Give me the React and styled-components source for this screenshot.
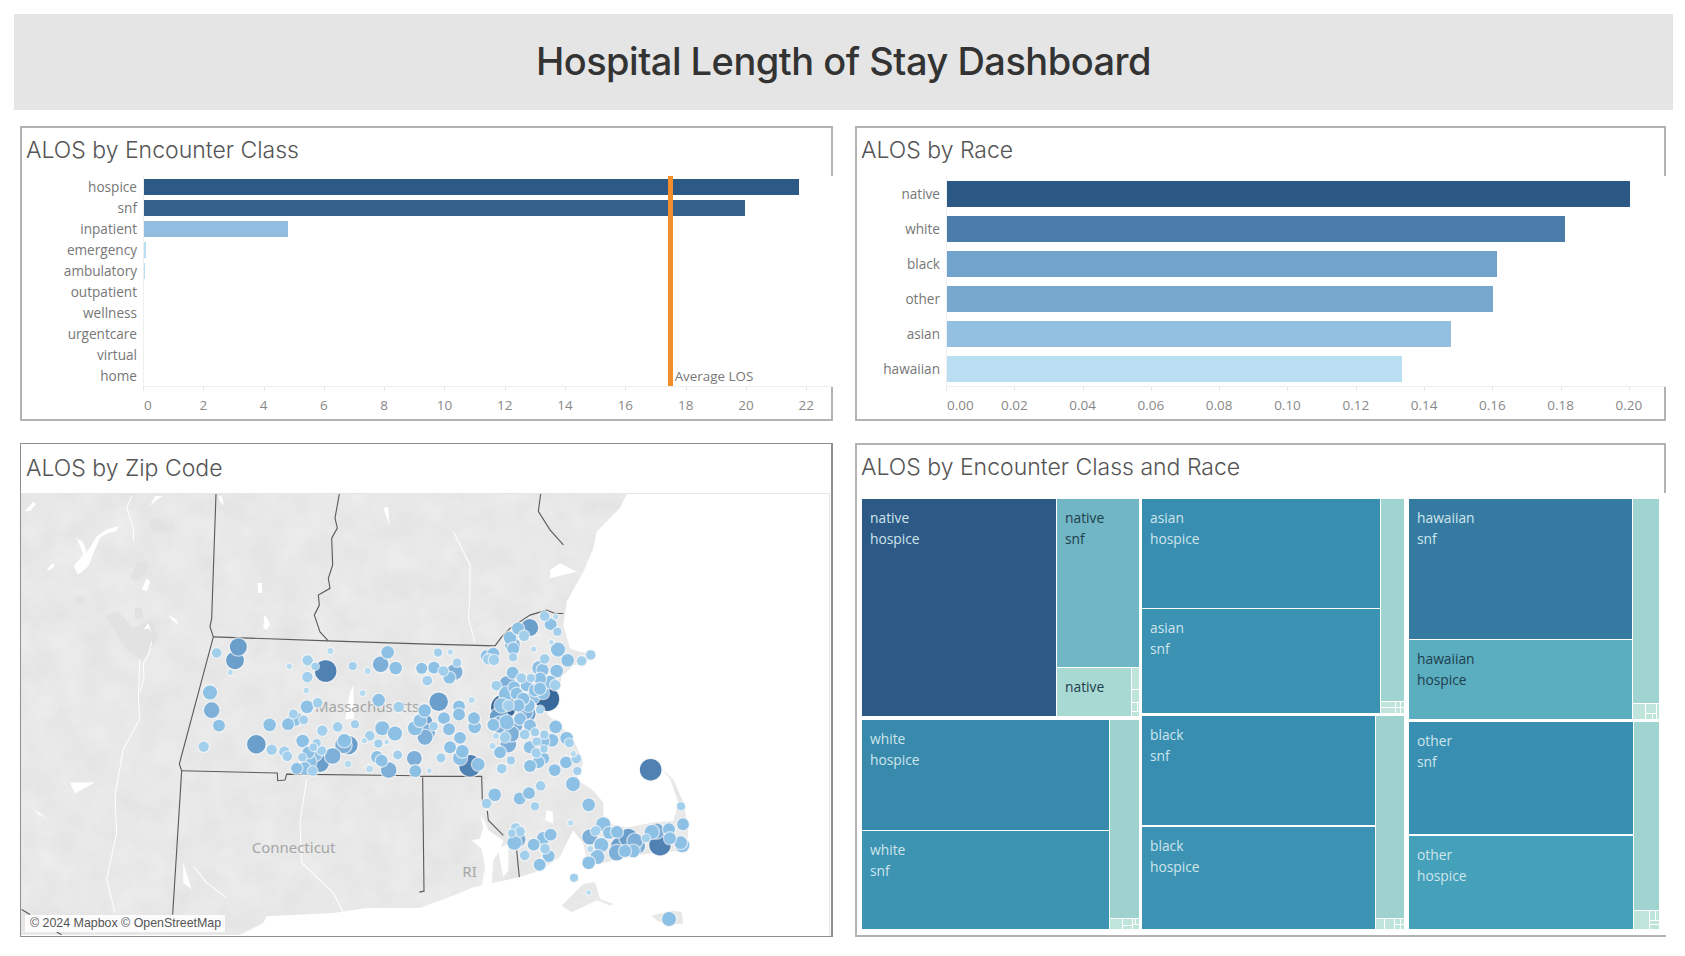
import React from 'react';
import styled, { createGlobalStyle } from 'styled-components';

const GlobalStyle = createGlobalStyle`
  html, body {
    margin: 0;
    padding: 0;
    background: #fff;
  }
  body {
    font-family: "Open Sans", "Noto Sans", sans-serif;
  }
`;

const Page = styled.div`
  width: 1685px;
  height: 956px;
  box-sizing: border-box;
  padding: 14px 12px 0 14px;
  overflow: hidden;
`;

const Banner = styled.header`
  height: 96px;
  padding-bottom: 2px;
  box-sizing: border-box;
  background: #e5e5e5;
  display: flex;
  align-items: center;
  justify-content: center;
`;

const BannerTitle = styled.h1`
  margin: 0;
  font-family: Inter, "Open Sans", sans-serif;
  font-size: 38px;
  font-weight: 500;
  letter-spacing: -0.5px;
  color: #333;
`;

const Board = styled.main`
  display: grid;
  grid-template-columns: 813px 811px;
  grid-template-rows: 295px 494px;
  column-gap: 22px;
  row-gap: 22px;
  margin: 16px 0 0 6px;
`;

const CardTitle = styled.h2`
  flex: 0 0 48px;
  margin: 0;
  padding-left: 4px;
  font-family: Inter, "Open Sans", sans-serif;
  font-size: 23px;
  font-weight: 300;
  line-height: 45px;
  color: #555;
`;

const Card = styled.section`
  box-sizing: border-box;
  border: 2px solid #b3b3b3;
  display: flex;
  flex-direction: column;
  min-width: 0;
`;

const MapCard = styled(Card)`
  border-color: #8f8f8f;
  border-width: 1px 2px 1px 1px;

  ${CardTitle} {
    flex-basis: 49px;
    padding-left: 5px;
    line-height: 48px;
  }
`;

/* bar charts */
const Chart = styled.div`
  display: grid;
  grid-template-columns: ${(p) => p.$labels}px minmax(0, 1fr);
  grid-template-rows: 211px 1fr;
  column-gap: 6px;
`;

const RowLabels = styled.div`
  display: flex;
  flex-direction: column;
  padding-bottom: 1px;
`;

const RowLabel = styled.div`
  flex: 1;
  display: flex;
  align-items: center;
  justify-content: flex-end;
  font-size: 13.6px;
  color: #777;
`;

const Plot = styled.div`
  position: relative;
  box-sizing: border-box;
  margin-right: -2px;
  background: #fff;
  border-left: 1px solid #efefef;
  border-bottom: 1px solid #efefef;
  display: flex;
  flex-direction: column;
`;

const BarRow = styled.div`
  flex: 1;
  display: flex;
  align-items: center;
`;

const Bar = styled.div`
  height: ${(p) => p.$h}px;
  background: ${(p) => p.$color};
`;

const RefLine = styled.div`
  position: absolute;
  top: 0;
  bottom: 0;
  width: 5px;
  background: #f28e2b;
`;

const RefLabel = styled.span`
  position: absolute;
  bottom: 0;
  line-height: 20px;
  font-size: 13.4px;
  color: #777;
  white-space: nowrap;
`;

const Axis = styled.div`
  grid-column: 2;
  display: flex;
  min-width: 0;
`;

const Tick = styled.div`
  flex: 0 0 ${(p) => p.$step}px;
  display: flex;
  flex-direction: column;
  align-items: flex-start;
`;

const TickMark = styled.div`
  width: 1px;
  height: 4px;
  background: #e6e6e6;
`;

const TickLabel = styled.span`
  margin-top: 5px;
  font-size: 13.5px;
  line-height: 18px;
  color: #888;
  transform: translateX(${(p) => (p.$first ? '1px' : '-50%')});
`;

/* map */
const MapFrame = styled.div`
  position: relative;
  height: 441px;
  margin-right: 1px;
  border-top: 1px solid #e6e6e6;
  border-right: 1px solid #e6e6e6;
`;

const MapArt = styled.svg`
  display: block;
  width: 100%;
  height: 100%;
`;

const MapText = styled.text`
  font-family: "Noto Sans", "Open Sans", sans-serif;
  font-size: 45px;
  fill: #a6a6a6;
`;

const Credit = styled.div`
  position: absolute;
  left: 4px;
  bottom: 3px;
  height: 17px;
  padding: 0 4px 0 5px;
  background: rgba(255, 255, 255, 0.85);
  font-family: "Liberation Sans", Arial, sans-serif;
  font-size: 12.4px;
  line-height: 17px;
  color: #555;
  white-space: nowrap;
`;

/* treemap */
const TreeBody = styled.div`
  flex: 1;
  display: flex;
  padding: 6px 0 0 5px;
  margin-right: -2px;
  background: #fff;
`;

const TreeRoot = styled.div`
  display: flex;
  height: 430px;
  align-items: stretch;
`;

const Split = styled.div`
  flex: 0 0 ${(p) => p.$size}px;
  display: flex;
  flex-direction: ${(p) => p.$dir};
  gap: ${(p) => p.$gap}px;
  min-width: 0;
  min-height: 0;
`;

const Cell = styled.div`
  flex: 0 0 ${(p) => p.$size}px;
  box-sizing: border-box;
  padding: ${(p) => (p.$text ? '9px 0 0 8px' : '0')};
  background: ${(p) => p.$bg};
  color: ${(p) => (p.$dark ? '#20404c' : '#cfe5ec')};
  font-size: 13.8px;
  line-height: 20.5px;
  overflow: hidden;
`;

const barsByClass = [
  ['hospice', 21.73, '#2c5985'],
  ['snf', 19.93, '#36618d'],
  ['inpatient', 4.78, '#90bde0'],
  ['emergency', 0.07, '#b9ddf1'],
  ['ambulatory', 0.03, '#b9ddf1'],
  ['outpatient', 0, '#b9ddf1'],
  ['wellness', 0, '#b9ddf1'],
  ['urgentcare', 0, '#b9ddf1'],
  ['virtual', 0, '#b9ddf1'],
  ['home', 0, '#b9ddf1'],
];

const barsByRace = [
  ['native', 0.2, '#2b5884'],
  ['white', 0.181, '#4a7baa'],
  ['black', 0.161, '#72a3cd'],
  ['other', 0.16, '#78a8ce'],
  ['asian', 0.1475, '#93bfe1'],
  ['hawaiian', 0.1332, '#b9ddf1'],
];

const classTicks = ['0', '2', '4', '6', '8', '10', '12', '14', '16', '18', '20', '22'];
const raceTicks = ['0.00', '0.02', '0.04', '0.06', '0.08', '0.10', '0.12', '0.14', '0.16', '0.18', '0.20'];

const BarChart = ({ data, ticks, step, scale, labels, barH, children }) => (
  <Chart $labels={labels}>
    <RowLabels>
      {data.map(([name]) => (
        <RowLabel key={name}>{name}</RowLabel>
      ))}
    </RowLabels>
    <Plot>
      {data.map(([name, value, color]) => (
        <BarRow key={name}>
          <Bar $h={barH} $color={color} style={{ width: value * scale }} />
        </BarRow>
      ))}
      {children}
    </Plot>
    <Axis>
      {ticks.map((t, i) => (
        <Tick key={t} $step={step}>
          <TickMark />
          <TickLabel $first={i === 0}>{t}</TickLabel>
        </Tick>
      ))}
    </Axis>
  </Chart>
);

// treemap tree, sizes in px along the parent's main axis
const mini = '#bfe4d9';
const strip = '#9dd2cf';
const c = (size, bg = mini, lines, dark) => ({ size, bg, lines, dark });
const r = (size, gap, ...kids) => ({ size, gap, kids, dir: 'row' });
const k = (size, gap, ...kids) => ({ size, gap, kids, dir: 'column' });

const treemap = r(
  797,
  3,
  k(
    277,
    4,
    r(
      217,
      1,
      c(194, '#2c5985', ['native', 'hospice']),
      k(
        82,
        1,
        c(168, '#70b6c4', ['native', 'snf'], true),
        r(48, 1, c(74, '#a9d9d3', ['native'], true), k(7, 1, c(21), c(12), r(8, 1, c(5), c(1)), c(4)))
      )
    ),
    r(
      209,
      1,
      k(247, 1, c(110, '#378aab', ['white', 'hospice']), c(98, '#3c93b2', ['white', 'snf'])),
      k(29, 1, c(198, strip), r(10, 1, c(12), k(9, 1, c(6), c(3)), k(6, 1, r(5, 1, c(2), c(3)), c(4))))
    )
  ),
  r(
    517,
    5,
    k(
      262,
      3,
      r(
        214,
        1,
        k(238, 1, c(109, '#388eb0', ['asian', 'hospice']), c(104, '#3b92b3', ['asian', 'snf'])),
        k(23, 1, c(202, '#9fd4d1'), r(11, 1, k(14, 1, c(5), c(5)), k(8, 1, r(5, 1, c(4), c(3)), r(5, 1, c(4), c(3)))))
      ),
      r(
        213,
        1,
        k(233, 2, c(109, '#388eb1', ['black', 'snf']), c(102, '#3c93b3', ['black', 'hospice'])),
        k(28, 1, c(202, strip), r(10, 1, c(8), c(9), k(9, 1, r(5, 1, c(5), c(3)), r(4, 1, c(5), c(3)))))
      )
    ),
    k(
      250,
      3,
      r(
        220,
        1,
        k(223, 1, c(140, '#357ba1', ['hawaiian', 'snf']), c(79, '#5badc0', ['hawaiian', 'hospice'], true)),
        k(26, 1, c(204, '#9fd4d1'), r(15, 1, c(12), k(10, 1, c(9), r(5, 1, c(6), c(3))), c(2)))
      ),
      r(
        207,
        1,
        k(224, 2, c(112, '#398fb1', ['other', 'snf']), c(93, '#45a0b9', ['other', 'hospice'])),
        k(25, 1, c(188, '#9fd4d1'), r(18, 1, c(15), k(9, 1, r(9, 1, c(5), c(3)), c(3), c(4))))
      )
    )
  )
);

const TreeNode = ({ node }) =>
  node.kids ? (
    <Split $size={node.size} $dir={node.dir} $gap={node.gap}>
      {node.kids.map((kid, i) => (
        <TreeNode key={i} node={kid} />
      ))}
    </Split>
  ) : (
    <Cell $size={node.size} $bg={node.bg} $dark={node.dark} $text={!!node.lines}>
      {node.lines && node.lines.map((l) => <div key={l}>{l}</div>)}
    </Cell>
  );

// map marks, [x, y, r] in the drawing's own units (3 units = 1px)
const westMarks = [
  [650, 663, 11], [715, 645, 21], [705, 685, 22], [691, 721, 5], [630, 781, 17], [635, 834, 19], [657, 880, 14],
  [611, 943, 12], [769, 936, 23], [809, 878, 15], [815, 952, 12], [853, 958, 12], [862, 972, 11], [864, 876, 14],
  [880, 845, 10], [885, 860, 17], [911, 863, 10], [921, 824, 15], [953, 812, 11], [923, 685, 12], [945, 703, 8],
  [977, 717, 27], [922, 735, 12], [919, 775, 5], [868, 703, 5], [991, 657, 6], [1058, 702, 9], [1103, 717, 6],
  [1142, 697, 19], [1163, 661, 15], [1187, 708, 15], [1088, 783, 6], [1136, 804, 15], [1196, 824, 12],
  [967, 895, 12], [1013, 884, 11], [1065, 876, 9], [1147, 888, 17], [1185, 904, 17], [1109, 911, 11],
  [1093, 925, 5], [1135, 934, 9], [1160, 929, 4], [1045, 938, 23], [1030, 938, 20], [1033, 925, 16],
  [908, 926, 15], [998, 971, 19], [960, 992, 22], [925, 960, 14], [945, 965, 17], [928, 988, 17], [907, 975, 9],
  [965, 955, 10], [950, 932, 9], [940, 945, 8], [890, 1008, 13], [913, 1008, 15], [938, 1016, 11], [1044, 995, 7],
  [1109, 1010, 7], [1131, 974, 14], [1145, 985, 14], [1166, 1013, 19], [1193, 968, 10], [1243, 978, 18],
  [1246, 1016, 14], [1245, 888, 17], [1260, 865, 15],
];

const eastMarks = [
  [54, 662, 9], [91, 660, 5], [111, 692, 9], [104, 720, 19], [88, 737, 14], [70, 717, 11], [42, 707, 14], [5, 709, 13],
  [22, 746, 11], [56, 809, 23], [155, 804, 6], [117, 823, 14], [117, 847, 14], [162, 858, 14], [164, 884, 15],
  [72, 858, 14], [87, 891, 14], [41, 882, 9], [14, 835, 15], [10, 870, 22], [22, 900, 19], [15, 915, 18],
  [120, 917, 14], [90, 945, 14], [127, 957, 15], [120, 977, 17], [150, 1000, 27], [175, 996, 15], [63, 977, 10],
  [28, 1015, 4], [374, 553, 11], [407, 555, 5], [329, 587, 21], [294, 590, 14], [312, 612, 12], [392, 577, 14],
  [412, 600, 9], [270, 618, 15], [278, 640, 18], [280, 650, 14], [394, 631, 4], [341, 651, 5], [414, 653, 17],
  [279, 676, 9], [200, 672, 14], [220, 665, 14], [205, 682, 12], [222, 684, 12], [443, 685, 15], [485, 687, 11],
  [512, 669, 11], [374, 681, 11], [410, 717, 15], [358, 708, 17], [368, 714, 14], [278, 722, 14], [304, 738, 11],
  [333, 738, 9], [360, 740, 14], [263, 756, 20], [229, 761, 11], [390, 750, 15], [406, 759, 12], [382, 801, 30],
  [369, 783, 14], [283, 766, 14], [320, 760, 14], [345, 775, 14], [258, 785, 17], [290, 785, 14], [310, 800, 14],
  [340, 795, 15], [360, 770, 14], [245, 820, 17], [250, 825, 31], [265, 820, 12], [295, 820, 14], [320, 845, 22],
  [315, 840, 18], [325, 820, 15], [236, 855, 22], [220, 878, 14], [240, 878, 20], [260, 870, 17], [285, 880, 18],
  [300, 860, 14], [330, 880, 14], [360, 833, 9], [345, 900, 9], [275, 905, 18], [314, 907, 11], [265, 937, 19],
  [255, 915, 12], [228, 911, 6], [218, 941, 6], [240, 960, 14], [329, 945, 14], [373, 907, 9], [350, 928, 9],
  [370, 928, 14], [396, 924, 15], [372, 950, 8], [407, 884, 15], [440, 918, 15], [448, 932, 10], [349, 962, 11],
  [370, 978, 14], [355, 990, 14], [330, 1001, 14], [273, 984, 9], [245, 1009, 11], [404, 1013, 14], [438, 990, 14],
  [469, 979, 11], [460, 964, 5], [472, 1016, 9], [362, 1060, 11], [459, 1055, 17], [224, 1087, 15], [200, 1113, 11],
  [299, 1098, 14], [327, 1082, 14], [345, 1121, 9], [506, 1117, 15], [692, 1012, 27], [783, 1121, 9], [789, 1175, 14],
  [452, 1171, 5], [550, 1175, 17], [527, 1195, 11], [509, 1213, 18], [567, 1201, 14], [591, 1198, 14], [544, 1237, 17],
  [511, 1249, 6], [532, 1273, 17], [506, 1290, 15], [600, 1240, 22], [590, 1260, 19], [625, 1215, 22], [645, 1225, 18],
  [615, 1255, 14], [640, 1255, 15], [652, 1240, 19], [678, 1217, 9], [695, 1198, 17], [710, 1195, 18], [747, 1190, 14],
  [750, 1217, 14], [720, 1236, 27], [782, 1230, 15], [787, 1238, 17], [287, 1186, 11], [300, 1197, 11], [275, 1202, 8],
  [293, 1220, 19], [283, 1230, 17], [370, 1217, 15], [392, 1206, 14], [341, 1236, 14], [375, 1248, 11], [386, 1270, 14],
  [314, 1268, 11], [359, 1296, 14], [462, 1335, 9], [506, 1379, 4], [747, 1458, 17],
];

const markColor = (size) => {
  if (size >= 30) return '#39699a';
  if (size >= 25) return '#4f81b3';
  if (size >= 21) return '#6a9ecb';
  if (size >= 18) return '#7dafd8';
  if (size >= 13) return '#8dc0e5';
  if (size >= 8) return '#a2cfeb';
  return '#b5dbf1';
};

const allMarks = [...westMarks, ...eastMarks.map(([x, y, s]) => [x + 1260, y, s])].sort((a, b) => b[2] - a[2]);

const borders = [
  'M648 188 L635 560 L630 585 L640 615 L538 995 L545 1015 L518 1445',
  'M640 615 L985 627 L1260 636',
  'M1018 188 L1005 260 L1012 290 L995 320 L998 400 L985 440 L990 470 L955 490 L958 520 L943 550 L960 600 L985 627',
  'M545 1015 L832 1022 L833 1045 L855 1043 L860 1025 L1260 1030',
  'M65 1430 L90 1445 M170 1497 L185 1505',
  'M1260 636 L1485 642 L1505 615 L1530 590 L1590 550 L1640 535 L1665 545 L1690 545',
  'M1622 188 L1615 240 L1650 295 L1690 340',
  'M1260 1032 L1445 1032 L1447 1105 M1462 1135 L1465 1163 L1510 1208',
  'M1268 1035 L1272 1375 L1258 1378',
  'M1550 1253 L1558 1333',
];

// shapes traced off the lake country in the north west corner
const northLakes = [
  '170,140 190,155 200,185 230,135 260,115 295,105 290,120 265,125 240,140 225,175 205,225 175,250 160,225 190,190',
  '15,60 40,32 48,40 30,60',
  '390,45 405,15 428,15 405,30',
  '80,235 100,215 103,225 88,238',
  '365,295 380,260 390,270 382,298',
  '445,370 470,385 475,400 455,385',
  '712,275 725,275 727,305 715,305',
  '733,370 745,385 750,400 740,415 730,410',
  '595,15 605,15 612,45 600,30',
  '370,415 385,395 395,425 385,410',
];

const northPatches = [
  '255,375 295,360 340,410 395,385 415,440 365,510 310,460 290,430',
  '330,260 350,215 385,210 380,245 350,270',
  '390,85 420,80 450,118 410,125 390,110',
  '345,350 365,350 372,380 345,385',
  '168,312 190,312 190,335 170,333',
];

const northRivers = ['M395 450 L385 490 L370 515 L372 560 L360 600', 'M335 15 L320 50 L340 110 L340 150'];

const rivers = [
  'M420 680 L415 800 L420 860 L370 950 L345 1090 L350 1200 L320 1340 L345 1440',
  'M920 1040 L900 1170 L905 1290 L1000 1380 L1030 1440',
  'M1360 300 L1410 400 L1410 480 L1405 560 L1425 630',
  'M580 1300 L620 1350 L680 1395',
];

const lakes = [
  '1150,230 1165,225 1168,280',
  '1050,780 1060,760 1062,860 1035,862',
  '210,1050 285,1050 225,1082',
  '100,1130 145,1158 115,1145',
  '550,1290 575,1370 550,1350',
  '1650,415 1680,395 1730,420 1690,430 1650,440',
];

const bay = [
  '120,105 135,125 145,150 175,170 190,180 185,200 205,190 205,270 190,290 175,215 160,240 155,310 125,320 135,260 125,205 95,180 120,175 130,140',
  '320,90 338,95 340,130 315,120',
];

const MapDrawing = () => (
  <MapArt viewBox="63 188 2424 1318" preserveAspectRatio="none">
    <defs>
      <filter id="mottle" x="0" y="0" width="100%" height="100%" colorInterpolationFilters="sRGB">
        <feTurbulence type="fractalNoise" baseFrequency="0.012" numOctaves="4" seed="4" />
        <feColorMatrix values="0.05 0 0 0 0.885  0.05 0 0 0 0.885  0.05 0 0 0 0.885  0 0 0 0 1" />
        <feComposite in2="SourceGraphic" operator="in" />
      </filter>
    </defs>
    <g filter="url(#mottle)">
      <polygon
        points="63,188 1880,188 1860,230 1820,270 1790,300 1780,350 1750,420 1700,510 1690,580 1710,650 1740,660 1785,665 1760,690 1720,700 1685,735 1670,790 1640,845 1680,880 1720,920 1750,990 1730,1040 1780,1075 1810,1110 1810,1170 1880,1185 1960,1170 2020,1165 2035,1110 2010,1040 1985,1010 2020,1040 2050,1110 2065,1183 2060,1253 1940,1263 1840,1283 1765,1303 1750,1233 1720,1193 1700,1230 1680,1273 1620,1313 1560,1333 1470,1353 1420,1363 1360,1388 1320,1403 1260,1425 1100,1425 1000,1440 800,1450 790,1470 720,1506 63,1506"
      />
      <polygon points="1685,1418 1750,1353 1785,1348 1800,1398 1840,1413 1830,1418 1790,1403 1715,1438" />
      <polygon points="1955,1448 2020,1433 2045,1438 2050,1473 2000,1473 1970,1463" />
    </g>
    <g transform="translate(60 179)">
      {northPatches.map((p) => (
        <polygon key={p} points={p} fill="#e2e2e2" />
      ))}
      {northLakes.map((p) => (
        <polygon key={p} points={p} fill="#fff" />
      ))}
      {northRivers.map((d) => (
        <path key={d} d={d} fill="none" stroke="#fff" strokeWidth="3" />
      ))}
    </g>
    {rivers.map((d) => (
      <path key={d} d={d} fill="none" stroke="#fff" strokeWidth="3" />
    ))}
    {lakes.map((p) => (
      <polygon key={p} points={p} fill="#fff" />
    ))}
    <g transform="translate(1320 1043)">
      {bay.map((p) => (
        <polygon key={p} points={p} fill="#fff" />
      ))}
    </g>
    {borders.map((d) => (
      <path key={d} d={d} fill="none" stroke="#5c5c5c" strokeWidth="3.4" />
    ))}
    <MapText x="945" y="840">Massachusetts</MapText>
    <MapText x="755" y="1262">Connecticut</MapText>
    <MapText x="1387" y="1334">RI</MapText>
    {allMarks.map(([x, y, size], i) => (
      <g key={i}>
        <circle cx={x} cy={y} r={size * 1.12 + 6} fill="#f3f5f7" fillOpacity="0.7" />
        <circle cx={x} cy={y} r={size * 1.12 + 2} fill={markColor(size)} />
      </g>
    ))}
  </MapArt>
);

export default function App() {
  return (
    <Page>
      <GlobalStyle />
      <Banner>
        <BannerTitle>Hospital Length of Stay Dashboard</BannerTitle>
      </Banner>
      <Board>
        <Card>
          <CardTitle>ALOS by Encounter Class</CardTitle>
          <BarChart data={barsByClass} ticks={classTicks} step={60.3} scale={30.15} labels={115} barH={16}>
            <RefLine style={{ left: 17.5 * 30.15 - 4 }} />
            <RefLabel style={{ left: 17.5 * 30.15 + 3 }}>Average LOS</RefLabel>
          </BarChart>
        </Card>
        <Card>
          <CardTitle>ALOS by Race</CardTitle>
          <BarChart data={barsByRace} ticks={raceTicks} step={68.3} scale={3415} labels={83} barH={26} />
        </Card>
        <MapCard>
          <CardTitle>ALOS by Zip Code</CardTitle>
          <MapFrame>
            <MapDrawing />
            <Credit>© 2024 Mapbox © OpenStreetMap</Credit>
          </MapFrame>
        </MapCard>
        <Card>
          <CardTitle>ALOS by Encounter Class and Race</CardTitle>
          <TreeBody>
            <TreeRoot>
              <TreeNode node={treemap} />
            </TreeRoot>
          </TreeBody>
        </Card>
      </Board>
    </Page>
  );
}
